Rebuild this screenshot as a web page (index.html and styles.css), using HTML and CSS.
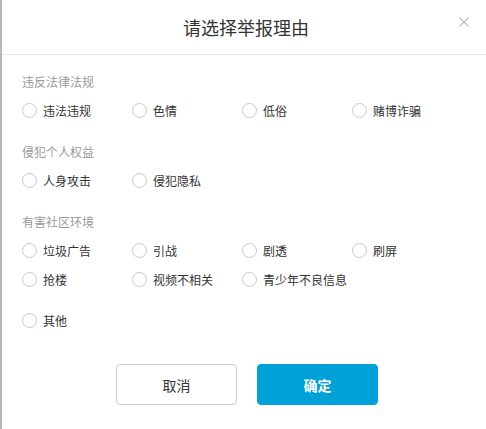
FILE: index.html
```html
<!DOCTYPE html>
<html>

<head>
    <title>举报</title>
    <link rel="stylesheet" href="styles.css">
</head>

<body>
    <div class="dialog">
        <div class="dialog-header">
            <span class="dialog-title">请选择举报理由</span>
            <span class="dialog-close">
                <svg width="10" height="10" viewBox="0 0 10 10">
                    <path d="M0.5 0.5 L9.5 9.5 M9.5 0.5 L0.5 9.5" stroke="#bbb" stroke-width="1.1" fill="none" />
                </svg>
            </span>
        </div>
        <div class="dialog-body">
            <div class="group">
                <div class="group-title">违反法律法规</div>
                <div class="options">
                    <label class="option"><span class="radio"></span>违法违规</label>
                    <label class="option"><span class="radio"></span>色情</label>
                    <label class="option"><span class="radio"></span>低俗</label>
                    <label class="option"><span class="radio"></span>赌博诈骗</label>
                </div>
            </div>
            <div class="group">
                <div class="group-title">侵犯个人权益</div>
                <div class="options">
                    <label class="option"><span class="radio"></span>人身攻击</label>
                    <label class="option"><span class="radio"></span>侵犯隐私</label>
                </div>
            </div>
            <div class="group">
                <div class="group-title">有害社区环境</div>
                <div class="options">
                    <label class="option"><span class="radio"></span>垃圾广告</label>
                    <label class="option"><span class="radio"></span>引战</label>
                    <label class="option"><span class="radio"></span>剧透</label>
                    <label class="option"><span class="radio"></span>刷屏</label>
                    <label class="option"><span class="radio"></span>抢楼</label>
                    <label class="option"><span class="radio"></span>视频不相关</label>
                    <label class="option"><span class="radio"></span>青少年不良信息</label>
                </div>
            </div>
            <div class="group group-other">
                <div class="options">
                    <label class="option"><span class="radio"></span>其他</label>
                </div>
            </div>
        </div>
        <div class="dialog-footer">
            <button class="btn btn-cancel">取消</button>
            <button class="btn btn-ok">确定</button>
        </div>
    </div>
</body>

</html>
```

FILE: styles.css
```css
html,
body {
    margin: 0;
    padding: 0;
    overflow: hidden;
}

body {
    background: #fff;
    font-family: "Noto Sans CJK SC", "Liberation Sans", sans-serif;
    border-left: 2px solid #b8b8b8;
    height: 429px;
    box-sizing: border-box;
}

.dialog {
    width: 484px;
}

.dialog-header {
    position: relative;
    height: 54px;
    border-bottom: 1px solid #e8e8e8;
    display: flex;
    align-items: center;
    justify-content: center;
    padding-left: 4px;
}

.dialog-title {
    font-size: 18px;
    color: #333;
    line-height: 24px;
}

.dialog-close {
    position: absolute;
    right: 17px;
    top: 17px;
    width: 10px;
    height: 10px;
    display: flex;
}

.dialog-body {
    padding: 17px 20px 0 20px;
}

.group {
    margin-bottom: 17px;
}

.group-title {
    font-size: 12px;
    line-height: 20px;
    color: #999;
    margin-bottom: 4px;
}

.options {
    display: grid;
    grid-template-columns: repeat(4, 110px);
}

.option {
    display: flex;
    align-items: center;
    height: 29px;
    font-size: 12px;
    color: #333;
    cursor: pointer;
}

.radio {
    width: 15px;
    height: 15px;
    box-sizing: border-box;
    border: 1px solid #c9c9c9;
    border-radius: 50%;
    margin-right: 6px;
    flex-shrink: 0;
}

.group-other {
    margin-top: -5px;
    margin-bottom: 0;
}

.dialog-footer {
    display: flex;
    justify-content: center;
    gap: 20px;
    padding-left: 6px;
    margin-top: 29px;
}

.btn {
    width: 121px;
    height: 41px;
    border-radius: 4px;
    font-family: "Noto Sans CJK SC", "Liberation Sans", sans-serif;
    font-size: 14px;
    cursor: pointer;
}

.btn-cancel {
    background: #fff;
    border: 1px solid #ccc;
    color: #333;
}

.btn-ok {
    background: #00a1d6;
    border: 1px solid #00a1d6;
    color: #fff;
    font-weight: bold;
}
```
